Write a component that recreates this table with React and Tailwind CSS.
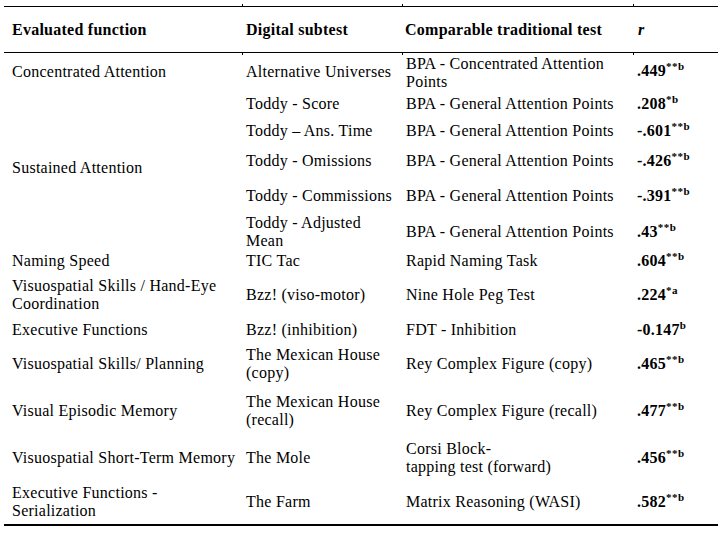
import React from "react";

const Sup = ({ children }) => (
  <span className="relative -top-[6px] text-[11px] font-bold tracking-[0.5px]">{children}</span>
);

const R = ({ v, s }) => (
  <span className="font-bold">
    {v}
    <Sup>{s}</Sup>
  </span>
);

const rows = [
  { c2: "Alternative Universes", c3: null, v: ".449", s: "**b" },
  { c2: "Toddy - Score", c3: "BPA - General Attention Points", v: ".208", s: "*b" },
  { c2: "Toddy \u2013 Ans. Time", c3: "BPA - General Attention Points", v: "-.601", s: "**b" },
  { c2: "Toddy - Omissions", c3: "BPA - General Attention Points", v: "-.426", s: "**b" },
  { c2: "Toddy - Commissions", c3: "BPA - General Attention Points", v: "-.391", s: "**b" },
  { c2: ["Toddy - Adjusted", "Mean"], c3: "BPA - General Attention Points", v: ".43", s: "**b" },
  { c2: "TIC Tac", c3: "Rapid Naming Task", v: ".604", s: "**b" },
  { c2: "Bzz! (viso-motor)", c3: "Nine Hole Peg Test", v: ".224", s: "*a" },
  { c2: "Bzz! (inhibition)", c3: "FDT - Inhibition", v: "-0.147", s: "b" },
  { c2: ["The Mexican House", "(copy)"], c3: "Rey Complex Figure (copy)", v: ".465", s: "**b" },
  { c2: ["The Mexican House", "(recall)"], c3: "Rey Complex Figure (recall)", v: ".477", s: "**b" },
  { c2: "The Mole", c3: ["Corsi Block-", "tapping test (forward)"], v: ".456", s: "**b" },
  { c2: "The Farm", c3: "Matrix Reasoning (WASI)", v: ".582", s: "**b" },
];

const rowStart = [
  "row-start-1",
  "row-start-2",
  "row-start-3",
  "row-start-4",
  "row-start-5",
  "row-start-6",
  "row-start-7",
  "row-start-8",
  "row-start-9",
  "row-start-10",
  "row-start-11",
  "row-start-12",
  "row-start-13",
];

const Lines = ({ t }) =>
  Array.isArray(t) ? (
    <div>
      {t.map((l, i) => (
        <div key={i}>{l}</div>
      ))}
    </div>
  ) : (
    <div>{t}</div>
  );

const col1 = [
  { r: "row-start-1", t: "Concentrated Attention" },
  { r: "row-start-2 row-span-5 pb-[4px]", t: "Sustained Attention" },
  { r: "row-start-7", t: "Naming Speed" },
  { r: "row-start-8", t: ["Visuospatial Skills / Hand-Eye", "Coordination"] },
  { r: "row-start-9", t: "Executive Functions" },
  { r: "row-start-10", t: "Visuospatial Skills/ Planning" },
  { r: "row-start-11", t: "Visual Episodic Memory" },
  { r: "row-start-12", t: "Visuospatial Short-Term Memory" },
  { r: "row-start-13", t: ["Executive Functions -", "Serialization"] },
];

export default function App() {
  return (
    <div
      className="w-[721px] h-[533px] bg-white text-black pt-[6px] pl-[4px] text-[16px] leading-[18px] tracking-[0.25px] whitespace-nowrap overflow-hidden"
      style={{ fontFamily: '"Liberation Serif", "Times New Roman", serif' }}
    >
      <div className="w-[714px]">
        <div className="relative grid grid-cols-[238px_160px_231px_85px] h-[47px] items-center border-t border-b border-black font-bold">
          <div className="pl-[8px]">Evaluated function</div>
          <div className="pl-[4px]">Digital subtest</div>
          <div className="pl-[3px]">Comparable traditional test</div>
          <div className="pl-[5px] italic">r</div>
          <span className="absolute left-[238px] -top-[3px] w-px h-[2px] bg-black" />
          <span className="absolute left-[398px] -top-[3px] w-px h-[2px] bg-black" />
          <span className="absolute left-[629px] -top-[3px] w-px h-[2px] bg-black" />
          <span className="absolute left-[238px] -bottom-[3px] w-px h-[2px] bg-black" />
          <span className="absolute left-[398px] -bottom-[3px] w-px h-[2px] bg-black" />
          <span className="absolute left-[629px] -bottom-[3px] w-px h-[2px] bg-black" />
        </div>
        <div className="grid grid-cols-[238px_160px_231px_85px] grid-rows-[37px_28px_26px_34px_36px_36px_22px_46px_24px_44px_50px_44px_44px] border-b-2 border-black">
          {col1.map((c, i) => (
            <div key={"a" + i} className={`col-start-1 ${c.r} flex items-center pl-[8px]`}>
              <Lines t={c.t} />
            </div>
          ))}
          {rows.map((r, i) => (
            <React.Fragment key={i}>
              <div className={`col-start-2 ${rowStart[i]} flex items-center pl-[4px]`}>
                <Lines t={r.c2} />
              </div>
              {r.c3 === null ? (
                <div className={`col-start-3 ${rowStart[i]} pl-[4px]`}>
                  <div className="mt-[2px]">
                    <div>BPA - Concentrated Attention</div>
                    <div>Points</div>
                  </div>
                </div>
              ) : (
                <div className={`col-start-3 ${rowStart[i]} flex items-center pl-[4px]`}>
                  <Lines t={r.c3} />
                </div>
              )}
              <div className={`col-start-4 ${rowStart[i]} flex items-center pl-[4px]`}>
                <R v={r.v} s={r.s} />
              </div>
            </React.Fragment>
          ))}
        </div>
      </div>
    </div>
  );
}
